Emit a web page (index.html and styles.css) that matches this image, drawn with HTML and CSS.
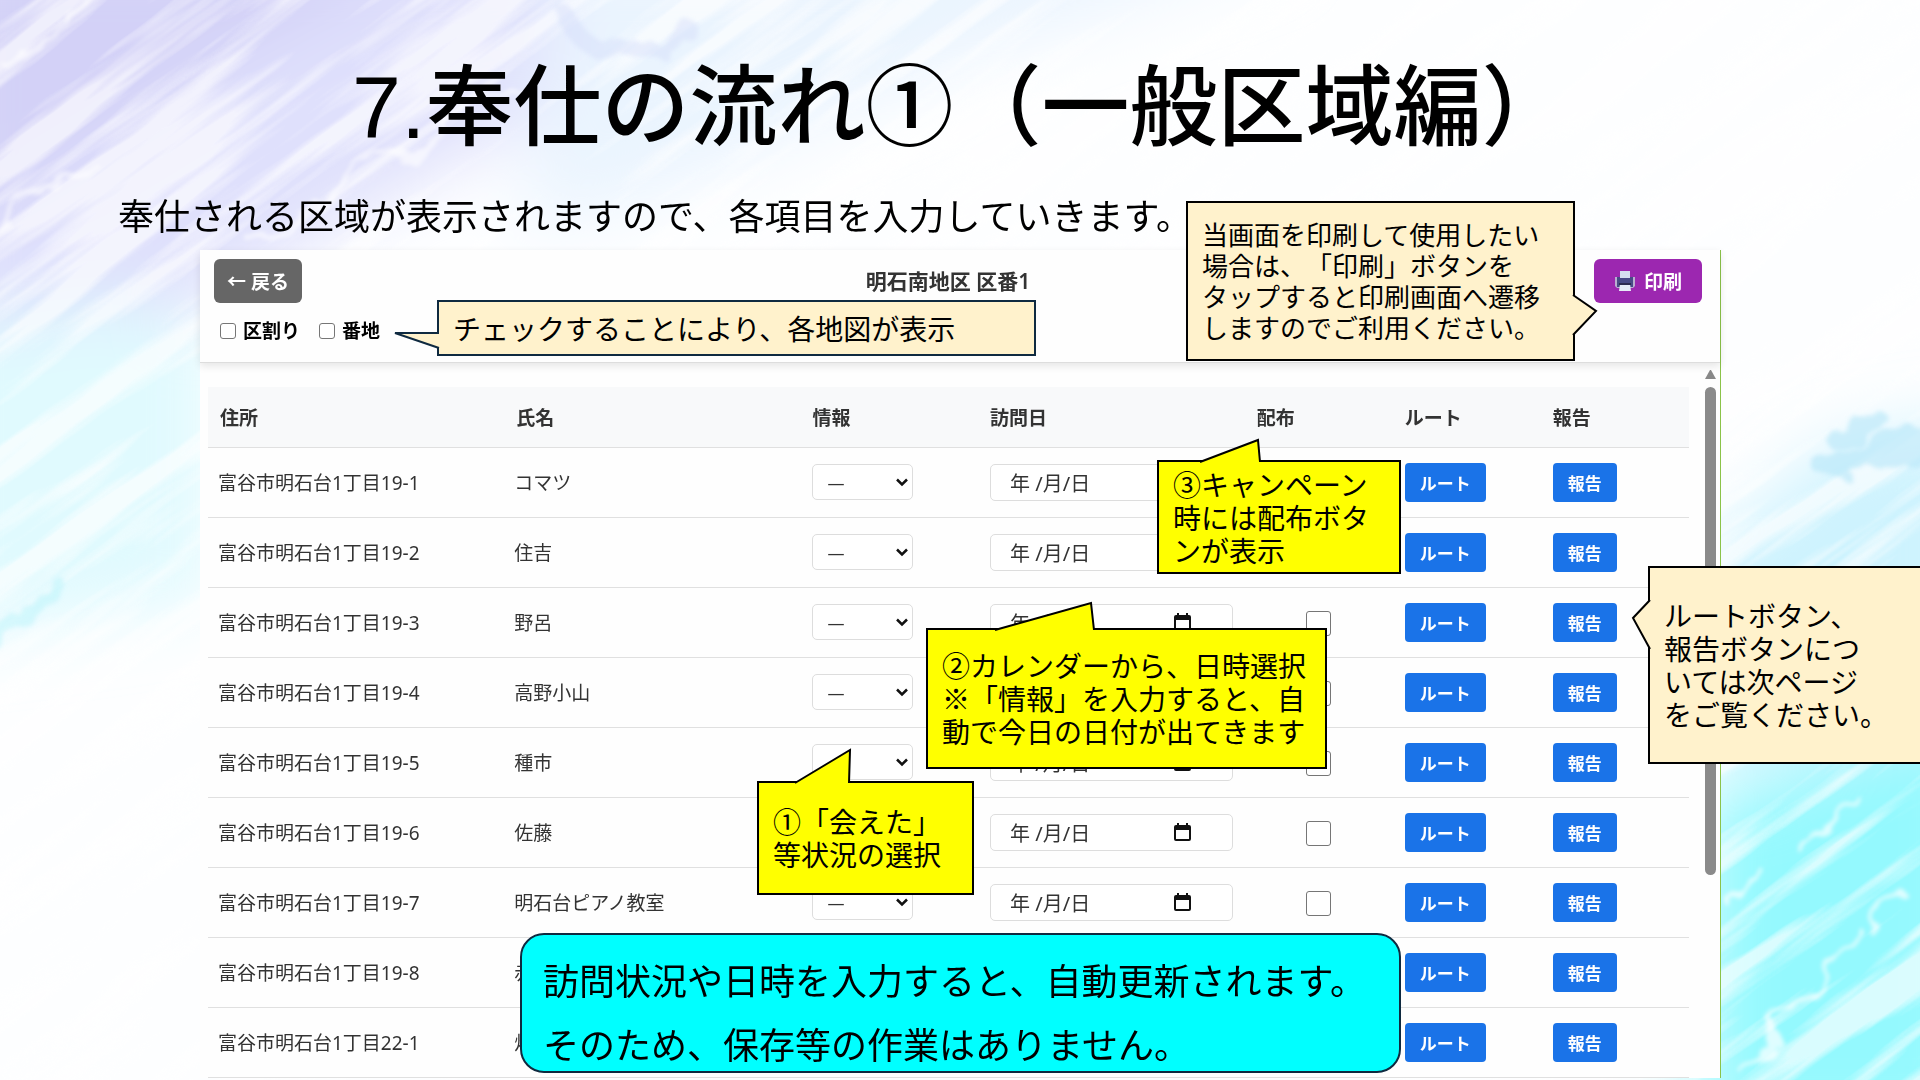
FILE: index.html
```html
<!DOCTYPE html>
<html lang="ja">
<head>
    <meta charset="UTF-8">
    <meta name="viewport" content="width=device-width, initial-scale=1.0">
    <title>奉仕の流れ</title>
    <link rel="stylesheet" href="styles.css">
</head>

<body>
    <div class="slide">
        <!-- 水彩の背景 -->
        <svg class="paint" viewBox="0 0 1920 1080" preserveAspectRatio="none" aria-hidden="true">
            <defs>
                <filter id="soft" x="-20%" y="-20%" width="140%" height="140%"><feGaussianBlur stdDeviation="34"/></filter>
                <filter id="edge" x="-20%" y="-20%" width="140%" height="140%">
                    <feTurbulence type="fractalNoise" baseFrequency="0.02" numOctaves="3" seed="4" result="n"/>
                    <feDisplacementMap in="SourceGraphic" in2="n" scale="40"/>
                    <feGaussianBlur stdDeviation="2"/>
                </filter>
                <filter id="bristle" x="0" y="0" width="100%" height="100%">
                    <feTurbulence type="fractalNoise" baseFrequency="0.003 0.03" numOctaves="4" seed="8"/>
                    <feColorMatrix values="0 0 0 0 1  0 0 0 0 1  0 0 0 0 1  5 0 0 0 -2.300"/>
                </filter>
            </defs>
            <g filter="url(#soft)">
                <path d="M-60 -60H880L640 60L420 180L200 300L-60 480Z" fill="#dfe0fc"/>
                <path d="M-60 -60H460L200 80L-60 240Z" fill="#d3d1f7"/>
                <path d="M560 -60H1300L960 60L640 200L520 230Z" fill="#eaf4fe"/>
                <path d="M-60 330L120 300L210 330L210 600L-60 640Z" fill="#e0fafe"/>
                <path d="M1700 560L1830 450L1980 420V760H1700Z" fill="#cdf3fe"/>
                <path d="M1700 800L1980 720V1140H1700Z" fill="#94f9fe"/>
            </g>
            <g transform="rotate(-36 960 540)">
                <rect x="-300" y="-600" width="2600" height="2300" filter="url(#bristle)" opacity=".65"/>
            </g>
            <g filter="url(#edge)" fill="none" stroke-linecap="round">
                <path d="M250 240L520 80M0 60L90 0M-10 230L90 160" stroke="#fff" stroke-width="6" opacity=".6"/>
                <path d="M560 10C590 60 620 70 690 30" stroke="#cfd9fb" stroke-width="18" opacity=".4"/>
                <path d="M-10 640L60 590" stroke="#b9f3fb" stroke-width="20" opacity=".5"/>
                <path d="M1724 900L1760 870M1740 1070L1860 930M1870 930L1900 890M1800 850L1860 800" stroke="#fff" stroke-width="5" opacity=".7"/>
                <path d="M1830 470L1930 440M1840 440L1880 425" stroke="#b4e6f9" stroke-width="24" opacity=".6"/>
            </g>
        </svg>

        <h1>7.奉仕の流れ①（一般区域編）</h1>
        <p class="lead">奉仕される区域が表示されますので、各項目を入力していきます。</p>

        <div class="app">
            <div class="toolbar">
                <div class="toolbar-row">
                    <button class="btn-back" type="button">← 戻る</button>
                    <h2>明石南地区 区番1</h2>
                    <button class="btn-print" type="button">
                        <svg width="22" height="22" viewBox="0 0 22 22" aria-hidden="true">
                            <path d="M1 7h20v9l-2 2H3l-2-2z" fill="#b9aed0"/>
                            <path d="M3 7h16v10H3z" fill="#484a86"/>
                            <rect x="6" y="1" width="10" height="7" fill="#d5dff0"/>
                            <path d="M6 14h10l1 7H5z" fill="#e6ecf7"/>
                            <path d="M5 13h12v2H5z" fill="#2c2b50"/>
                        </svg>
                        印刷
                    </button>
                </div>
                <div class="checks">
                    <label><input type="checkbox">区割り</label>
                    <label><input type="checkbox">番地</label>
                </div>
            </div>

            <div class="list">
                <div class="table-wrap">
                    <table>
                        <colgroup>
                            <col class="w20"><col class="w20"><col class="w12"><col class="w18"><col class="w10"><col class="w10"><col class="w10">
                        </colgroup>
                        <thead>
                            <tr><th>住所</th><th>氏名</th><th>情報</th><th>訪問日</th><th>配布</th><th>ルート</th><th>報告</th></tr>
                        </thead>
                        <tbody id="rows"></tbody>
                    </table>
                </div>
                <div class="scrollbar"><span class="arrow"></span><span class="thumb"></span></div>
            </div>
        </div>

        <div class="callout map">
            <svg class="tail" width="45" height="18" viewBox="0 0 45 18"><path d="M45 1H1L45 16"/></svg>
            チェックすることにより、各地図が表示
        </div>
        <div class="callout print">
            <svg class="tail" width="25" height="42" viewBox="0 0 25 42"><path d="M0 1L23 17L0 41"/></svg>
            当画面を印刷して使用したい<br>場合は、「印刷」ボタンを<br>タップすると印刷画面へ遷移<br>しますのでご利用ください。
        </div>
        <div class="callout report">
            <svg class="tail" width="19" height="52" viewBox="0 0 19 52"><path d="M19 2L2 20L19 51"/></svg>
            ルートボタン、<br>報告ボタンにつ<br>いては次ページ<br>をご覧ください。
        </div>
        <div class="callout step step3">
            <svg class="tail" width="63" height="24" viewBox="0 0 63 24"><path d="M1 24L59 2L61 24"/></svg>
            ③キャンペーン<br>時には配布ボタ<br>ンが表示
        </div>
        <div class="callout step step2">
            <svg class="tail" width="102" height="29" viewBox="0 0 102 29"><path d="M1 29L97 2L100 29"/></svg>
            ②カレンダーから、日時選択<br>※「情報」を入力すると、自<br>動で今日の日付が出てきます
        </div>
        <div class="callout step step1">
            <svg class="tail" width="58" height="35" viewBox="0 0 58 35"><path d="M1 35L56 2L55 35"/></svg>
            ①「会えた」<br>等状況の選択
        </div>
        <div class="notice">訪問状況や日時を入力すると、自動更新されます。<br>そのため、保存等の作業はありません。</div>
    </div>

    <script src="script.js"></script>
</body>
</html>
```

FILE: styles.css
```css
*{
    box-sizing: border-box;
}

body{
    margin: 0;
    font-family: "Liberation Sans", "Noto Sans CJK JP", sans-serif;
    color: #000;
    background-color: #fdfeff;
    text-spacing-trim: space-all;
}

button, input, select{
    font-family: inherit;
}

.slide{
    position: relative;
    height: 100vh;
    overflow: hidden;
    padding: 42px 199px 0 200px;
}

.paint{
    position: absolute;
    left: 0;
    top: 0;
    width: 100%;
    height: 100%;
    z-index: -1;
}

h1{
    margin: 0 0 0 152px;
    font-size: 88px;
    line-height: 132px;
    font-weight: 500;
    white-space: nowrap;
}

.lead{
    margin: 18px 0 6px -82px;
    font-size: 36px;
    line-height: 52px;
    white-space: nowrap;
}

/* アプリ画面 */
.app{
    font-family: "Noto Sans", "Noto Sans CJK JP", sans-serif;
    background-color: #fefefe;
    border-right: 1px solid #8bc34a;
}

.toolbar{
    height: 113px;
    padding: 9px 18px 0 14px;
    border-bottom: 1px solid #ddd;
    box-shadow: 0 3px 8px rgba(0,0,0,0.1);
}

.toolbar-row{
    display: flex;
    justify-content: space-between;
    align-items: center;
}

.toolbar h2{
    margin: 0;
    font-size: 21px;
    line-height: 30px;
    color: #333;
    font-weight: 600;
}

.btn-back, .btn-print{
    height: 44px;
    border: none;
    border-radius: 6px;
    color: #fff;
    font-size: 19px;
    font-weight: 700;
}

.btn-back{
    width: 88px;
    padding: 0;
    background-color: #666;
}

.btn-print{
    display: flex;
    align-items: center;
    justify-content: center;
    gap: 8px;
    width: 108px;
    padding: 0;
    background-color: #9c27b0;
}

.checks{
    display: flex;
    gap: 19px;
    padding: 13px 0 0 6px;
}

.checks label{
    display: flex;
    align-items: center;
    gap: 7px;
    font-size: 19px;
    line-height: 30px;
    font-weight: 600;
}

input[type="checkbox"]{
    appearance: none;
    margin: 0;
    background-color: #fff;
    border: 1px solid #767676;
    border-radius: 3px;
}

.checks input{
    width: 16px;
    height: 16px;
}

.list{
    display: flex;
    gap: 16px;
    padding: 5px 4px 0 8px;
}

.table-wrap{
    flex: 1;
    padding-top: 19px;
}

table{
    width: 100%;
    table-layout: fixed;
    border-collapse: collapse;
    font-size: 19px;
    color: #333;
}

.w20{ width: 20%; }
.w18{ width: 18%; }
.w12{ width: 12%; }
.w10{ width: 10%; }

th{
    height: 60px;
    padding: 0 12px;
    text-align: left;
    font-weight: 600;
    background-color: #f8f9fa;
    border-bottom: 1px solid #e0e0e0;
}

td{
    height: 70px;
    padding: 0 10px;
    border-bottom: 1px solid #e0e0e0;
    white-space: nowrap;
}

.control, .date{
    border: 1px solid #ddd;
    border-radius: 5px;
    background-color: #fff;
}

.select{
    position: relative;
    display: block;
    width: 101px;
    margin-left: 2px;
}

.select select{
    appearance: none;
    display: block;
    width: 100%;
    height: 36px;
    padding: 0 14px;
    font-size: 17px;
    color: #333;
}

.select svg{
    position: absolute;
    right: 5px;
    top: 14px;
}

.date{
    display: flex;
    align-items: center;
    height: 37px;
    margin: 0 2px;
    padding: 0 41px 0 19px;
}

.date input{
    flex: 1;
    min-width: 0;
    padding: 0;
    border: none;
    outline: none;
    background: none;
    font-size: 20px;
    color: #333;
}

.give{
    text-align: center;
}

.give input{
    width: 25px;
    height: 25px;
    vertical-align: middle;
}

.btn-blue{
    height: 39px;
    margin-left: 2px;
    padding: 0 15px;
    border: none;
    border-radius: 4px;
    background-color: #1a73e8;
    color: #fff;
    font-size: 17px;
    font-weight: 700;
}

.scrollbar{
    width: 11px;
}

.scrollbar .arrow{
    display: block;
    margin: 2px 0 8px;
    border: 5px solid transparent;
    border-top: none;
    border-bottom: 9px solid #888;
}

.scrollbar .thumb{
    display: block;
    height: 488px;
    border-radius: 6px;
    background-color: #8a8a8a;
}

/* 吹き出し */
.callout{
    position: absolute;
    display: grid;
    align-content: center;
    padding: 4px 14px 0;
    border: 2px solid #000;
    background-color: #fff2cc;
    font-size: 28px;
    line-height: 33px;
    white-space: nowrap;
}

.tail{
    position: absolute;
    overflow: visible;
}

.tail path{
    fill: #fff2cc;
    stroke: #000;
    stroke-width: 2;
}

.map{
    left: 437px;
    top: 300px;
    width: 599px;
    height: 56px;
    border-color: #0f2a40;
}

.map .tail{
    left: -45px;
    top: 30px;
}

.map .tail path{
    stroke: #0f2a40;
}

.print{
    left: 1186px;
    top: 201px;
    width: 389px;
    height: 160px;
    font-size: 26px;
    line-height: 31px;
}

.print .tail{
    right: -25px;
    top: 91px;
}

.report{
    left: 1648px;
    top: 566px;
    width: 290px;
    height: 198px;
}

.report .tail{
    left: -19px;
    top: 30px;
}

.step{
    background-color: #ff0;
}

.step .tail path{
    fill: #ff0;
}

.step3{
    left: 1157px;
    top: 460px;
    width: 244px;
    height: 114px;
}

.step3 .tail{
    left: 40px;
    top: -24px;
}

.step2{
    left: 926px;
    top: 628px;
    width: 401px;
    height: 141px;
}

.step2 .tail{
    left: 66px;
    top: -29px;
}

.step1{
    left: 757px;
    top: 781px;
    width: 217px;
    height: 114px;
}

.step1 .tail{
    left: 35px;
    top: -35px;
}

.notice{
    position: absolute;
    left: 520px;
    top: 933px;
    width: 881px;
    height: 140px;
    padding: 16px 21px;
    border: 2px solid #0f2a40;
    border-radius: 24px;
    background-color: #0ff;
    font-size: 36px;
    line-height: 64px;
    white-space: nowrap;
}
```

FILE: script.js
```js
const rows = [
    ['富谷市明石台1丁目19-1', 'コマツ'],
    ['富谷市明石台1丁目19-2', '住吉'],
    ['富谷市明石台1丁目19-3', '野呂'],
    ['富谷市明石台1丁目19-4', '高野小山'],
    ['富谷市明石台1丁目19-5', '種市'],
    ['富谷市明石台1丁目19-6', '佐藤'],
    ['富谷市明石台1丁目19-7', '明石台ピアノ教室'],
    ['富谷市明石台1丁目19-8', '赤'],
    ['富谷市明石台1丁目22-1', '畑']
];

document.getElementById('rows').innerHTML = rows.map(([address, name]) => `
    <tr>
        <td>${address}</td>
        <td>${name}</td>
        <td>
            <span class="select">
                <select class="control" aria-label="情報"><option>―</option></select>
                <svg width="12" height="9" viewBox="0 0 12 9"><path d="M1 1.500L6 6.500L11 1.500" fill="none" stroke="#111" stroke-width="2.500"/></svg>
            </span>
        </td>
        <td>
            <div class="date">
                <input type="text" aria-label="訪問日" value="年 /月/日">
                <svg width="17" height="18" viewBox="0 0 17 18"><path d="M4 0v3M13 0v3" stroke="#111" stroke-width="2"/><rect x="1" y="3" width="15" height="14" rx="1" fill="none" stroke="#111" stroke-width="2"/><path d="M1 3h15v4H1z" fill="#111"/></svg>
            </div>
        </td>
        <td class="give"><input type="checkbox" aria-label="配布"></td>
        <td><button class="btn-blue" type="button">ルート</button></td>
        <td><button class="btn-blue" type="button">報告</button></td>
    </tr>`).join('');
```
